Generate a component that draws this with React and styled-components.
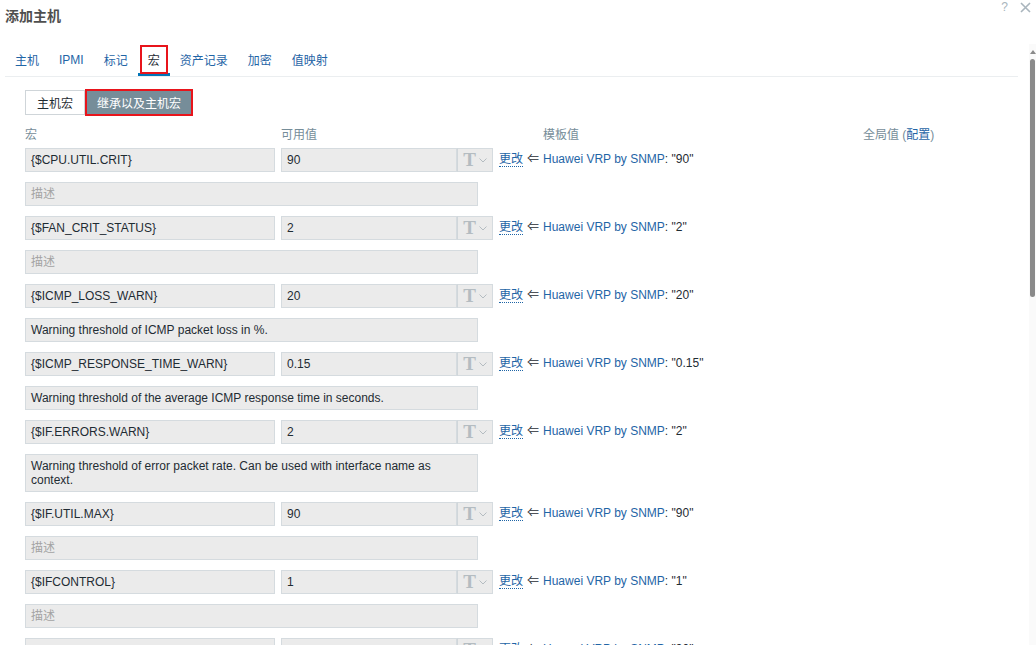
import React from "react";
import styled, { createGlobalStyle } from "styled-components";

const Global = createGlobalStyle`
  html, body { margin: 0; padding: 0; background: #fff; }
  body {
    font-family: "Liberation Sans", "Noto Sans CJK SC", Arial, sans-serif;
    font-size: 12px;
    color: #1f2c33;
    overflow: hidden;
  }
`;

const Page = styled.div`
  width: 1036px;
  height: 645px;
  display: flex;
  flex-direction: column;
  overflow: hidden;
`;

const Header = styled.div`
  height: 44px;
  flex: none;
  display: flex;
  align-items: flex-start;
  justify-content: space-between;
  padding: 0 5px;
`;

const Title = styled.h4`
  margin: 0;
  padding-top: 8px;
  font-size: 14px;
  line-height: 16px;
  font-weight: bold;
  color: #4f4f4f;
`;

const HeaderIcons = styled.div`
  display: flex;
  gap: 12px;
  color: #a9b5bd;
  font-size: 12px;
  line-height: 14px;
`;

const Body = styled.div`
  flex: 1;
  display: flex;
  min-height: 0;
`;

const Content = styled.div`
  flex: 1;
  overflow: hidden;
  padding: 0 11px 0 5px;
`;

const TrackCol = styled.div`
  width: 7px;
  flex: none;
  background: #fafafa;
  display: flex;
  flex-direction: column;
  align-items: center;
  padding-top: 6px;
`;

const Thumb = styled.div`
  width: 5px;
  height: 238px;
  margin-top: 5px;
  border-radius: 3px;
  background: #8a8a8a;
`;

const TabList = styled.div`
  display: flex;
  border-bottom: 1px solid #ebeef0;
  height: 32px;
`;

const Tab = styled.div`
  padding: 2px 10px 0;
  height: 32px;
  display: flex;
  align-items: center;
  box-sizing: border-box;
  color: #1f65a6;
  font-size: 12px;
  border-bottom: 3px solid ${(p) => (p.$active ? "#0275b8" : "transparent")};
`;

const TabLabel = styled.span`
  color: ${(p) => (p.$active ? "#1f2c33" : "#1f65a6")};
  ${(p) =>
    p.$active &&
    `border: 2px solid #e8141b; padding: 4px 6px; margin: 0 -8px;`}
`;

const Form = styled.div`
  padding: 13px 20px 0;
`;

const Radio = styled.div`
  display: flex;
`;

const RadioBtn = styled.div`
  height: 25px;
  box-sizing: border-box;
  display: flex;
  align-items: center;
  padding: 0 11px;
  font-size: 12px;
  border: 1px solid #cfd5d9;
  background: #fff;
  color: #1f2c33;
  ${(p) =>
    p.$selected &&
    `background: #768d99; color: #fff; border: 2px solid #e8141b; height: 27px; margin-top: -1px; padding: 0 10px;`}
`;

const HeadRow = styled.div`
  display: grid;
  grid-template-columns: 256px 262px 320px auto;
  margin-top: 11px;
  height: 16px;
  line-height: 16px;
  color: #768d99;
  font-size: 12px;
  margin-bottom: 5px;
`;

const Conf = styled.span`
  color: #1f65a6;
`;

const Rows = styled.div`
  display: flex;
  flex-direction: column;
  gap: 10px;
`;

const Line = styled.div`
  display: flex;
  align-items: center;
`;

const Field = styled.div`
  box-sizing: border-box;
  width: ${(p) => p.$w}px;
  min-height: 24px;
  padding: 4px 5px;
  line-height: 14px;
  background: #ebebeb;
  border: 1px solid #d5dbdf;
  color: ${(p) => (p.$placeholder ? "#a3a3a3" : "#1f2c33")};
  font-size: 12px;
  white-space: ${(p) => (p.$wrap ? "normal" : "nowrap")};
`;

const ValueGroup = styled.div`
  display: flex;
  margin-left: 6px;
`;

const TypeBtn = styled.div`
  box-sizing: border-box;
  width: 36px;
  height: 24px;
  background: #ebebeb;
  border: 1px solid #d5dbdf;
  border-left: 1px solid #d0d6da;
  display: flex;
  align-items: center;
  justify-content: center;
  gap: 3px;
  color: #b4bcc1;
`;

const TGlyph = styled.span`
  font-family: "Liberation Serif", "DejaVu Serif", serif;
  font-weight: bold;
  font-size: 19px;
  line-height: 18px;
`;

const Tmpl = styled.div`
  margin: 0 0 3px 6px;
  line-height: 14px;
  white-space: nowrap;
  font-size: 12px;
  color: #1f2c33;
`;

const Change = styled.span`
  color: #1f65a6;
  border-bottom: 1px dotted #1f65a6;
`;

const Arrow = styled.span`
  margin: 0 4px 0 4px;
`;

const Link = styled.span`
  color: #1f65a6;
`;

const rows = [
  ["{$CPU.UTIL.CRIT}", "90", ""],
  ["{$FAN_CRIT_STATUS}", "2", ""],
  ["{$ICMP_LOSS_WARN}", "20", "Warning threshold of ICMP packet loss in %."],
  ["{$ICMP_RESPONSE_TIME_WARN}", "0.15", "Warning threshold of the average ICMP response time in seconds."],
  ["{$IF.ERRORS.WARN}", "2", "Warning threshold of error packet rate. Can be used with interface name as context."],
  ["{$IF.UTIL.MAX}", "90", ""],
  ["{$IFCONTROL}", "1", ""],
  ["{$MEMORY.UTIL.MAX}", "90", ""],
];

const tabs = ["主机", "IPMI", "标记", "宏", "资产记录", "加密", "值映射"];

export default function App() {
  return (
    <Page>
      <Global />
      <Header>
        <Title>添加主机</Title>
        <HeaderIcons>
          <span>?</span>
          <svg width="11" height="11" viewBox="0 0 11 11" style={{ marginTop: 2 }}>
            <path d="M1 1 L10 10 M10 1 L1 10" stroke="#a9b5bd" strokeWidth="1.6" />
          </svg>
        </HeaderIcons>
      </Header>
      <Body>
        <Content>
          <TabList>
            {tabs.map((t) => (
              <Tab key={t} $active={t === "宏"}>
                <TabLabel $active={t === "宏"}>{t}</TabLabel>
              </Tab>
            ))}
          </TabList>
          <Form>
            <Radio>
              <RadioBtn>主机宏</RadioBtn>
              <RadioBtn $selected>继承以及主机宏</RadioBtn>
            </Radio>
            <HeadRow>
              <span>宏</span>
              <span>可用值</span>
              <span>模板值</span>
              <span>
                全局值 (<Conf>配置</Conf>)
              </span>
            </HeadRow>
            <Rows>
              {rows.map(([m, v, d]) => (
                <React.Fragment key={m}>
                  <Line>
                    <Field $w={250}>{m}</Field>
                    <ValueGroup>
                      <Field $w={176}>{v}</Field>
                      <TypeBtn>
                        <TGlyph>T</TGlyph>
                        <svg width="8" height="5" viewBox="0 0 8 5">
                          <path d="M0.5 0.5 L4 4 L7.5 0.5" fill="none" stroke="#b4bcc1" strokeWidth="1" />
                        </svg>
                      </TypeBtn>
                    </ValueGroup>
                    <Tmpl>
                      <Change>更改</Change>
                      <Arrow>⇐</Arrow>
                      <Link>Huawei VRP by SNMP</Link>: "{v}"
                    </Tmpl>
                  </Line>
                  <Line>
                    <Field $w={453} $placeholder={!d} $wrap>
                      {d || "描述"}
                    </Field>
                  </Line>
                </React.Fragment>
              ))}
            </Rows>
          </Form>
        </Content>
        <TrackCol>
          <svg width="6" height="4" viewBox="0 0 6 4">
            <path d="M0 4 L3 0 L6 4 Z" fill="#8a8a8a" />
          </svg>
          <Thumb />
        </TrackCol>
      </Body>
    </Page>
  );
}
